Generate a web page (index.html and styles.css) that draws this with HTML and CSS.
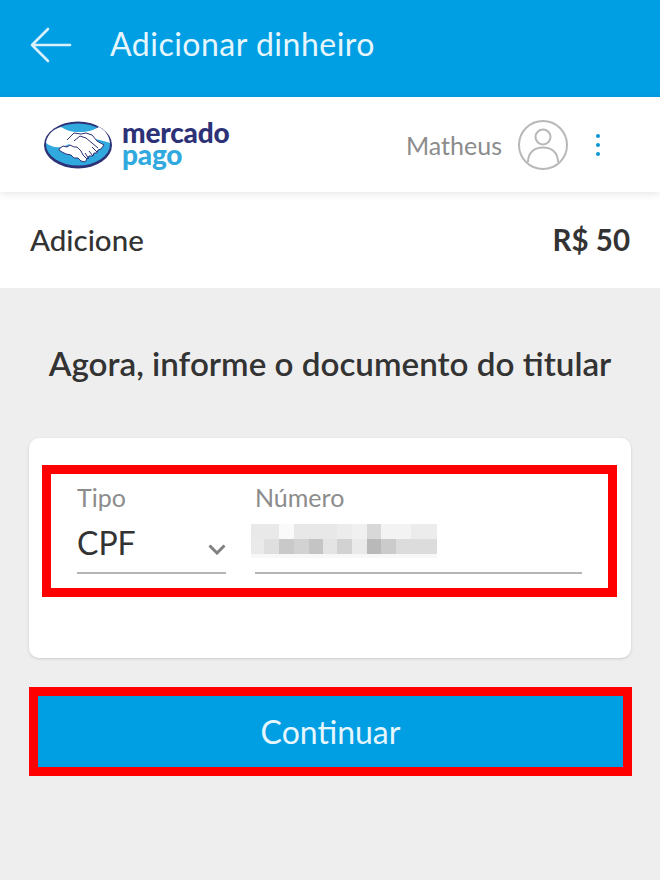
FILE: index.html
```html
<!DOCTYPE html>
<html lang="en">
<head>
    <meta charset="UTF-8">
    <meta name="viewport" content="width=device-width, initial-scale=1.0">
    <title>Adicionar dinheiro</title>
    <link rel="stylesheet" href="styles.css">
</head>
<body>
    <header class="app-bar">
        <svg class="back-icon" width="42" height="36" viewBox="0 0 42 36" fill="none" stroke="#d9f1fb" stroke-width="2.6" stroke-linecap="round" stroke-linejoin="round">
            <path d="M40 18H2M18 2L2 18l16 16"/>
        </svg>
        <h1>Adicionar dinheiro</h1>
    </header>

    <div class="brand-bar">
        <div class="logo">
            <svg width="70" height="48" viewBox="0 0 70 48">
                <ellipse cx="35" cy="24" rx="34" ry="23.500" fill="#2d3277"/>
                <ellipse cx="35" cy="23.500" rx="32" ry="21" fill="#30a9de"/>
                <path d="M3 22C4 14 10 8 18 6c5 3 10 5 18 5 9 0 15-2 20-5 6 3 10 8 11 16-5-2-10-3-15-4-6 1-12 2-17 2-6 1-11 5-17 6-6 1-11-1-15-4z" fill="#fff"/>
                <path d="M24 19l7-7 7 1 5-1 6 2 5 6 7 4-3 4-3 1-1 3-3 0-1 3-4 0-2 3-4 0-4-2-5-4" fill="#fff" stroke="#2d3277" stroke-width="1" stroke-linejoin="round"/>
                <path d="M16 28l4-3 4 1 3-2 4 2 3 0 4 4 2 4 4 4-2 3-4-1-3-3-4 0-3-3-5-1-4-2-3-2z" fill="#fff" stroke="#2d3277" stroke-width="1" stroke-linejoin="round"/>
                <path d="M31 20l6-5 6 2 12 10M46 38l-4-6M50 35l-4-5M54 31l-5-5" fill="none" stroke="#2d3277" stroke-width="1"/>
            </svg>
            <div class="logo-text">
                <span class="logo-mercado">mercado</span>
                <span class="logo-pago">pago</span>
            </div>
        </div>
        <div class="user">
            <span class="user-name">Matheus</span>
            <svg class="avatar" width="50" height="50" viewBox="0 0 50 50" fill="none" stroke="#b8b8b8" stroke-width="2">
                <circle cx="25" cy="25" r="24"/>
                <circle cx="25" cy="17" r="7.500"/>
                <path d="M10 42c0-10 7-14.500 15-14.500S40 32 40 42"/>
            </svg>
            <div class="dots"><i></i><i></i><i></i></div>
        </div>
    </div>

    <div class="amount-row">
        <span>Adicione</span>
        <span class="amount">R$ 50</span>
    </div>

    <main class="content">
        <h2>Agora, informe o documento do titular</h2>
        <div class="card">
            <div class="fields">
                <div class="field field-type">
                    <label>Tipo</label>
                    <div class="value">
                        CPF
                        <svg class="chevron" width="18" height="11" viewBox="0 0 18 11" fill="none" stroke="#808080" stroke-width="3">
                            <path d="M1.500 1.500L9 9l7.500-7.500"/>
                        </svg>
                    </div>
                </div>
                <div class="field field-number">
                    <label>Número</label>
                    <div class="value">
                        <div class="blur"></div>
                    </div>
                </div>
            </div>
        </div>
        <button class="continue">Continuar</button>
    </main>
</body>
</html>
```

FILE: styles.css
```css
* {
    margin: 0;
    padding: 0;
    box-sizing: border-box;
}
body {
    font-family: Lato, sans-serif;
    background-color: #eeeeee;
    color: #333333;
    min-height: 100vh;
}
.app-bar {
    height: 97px;
    background-color: #009ee3;
    display: flex;
    align-items: center;
    padding: 0 0 8px 30px;
    gap: 38px;
}
.back-icon {
    flex-shrink: 0;
}
.app-bar h1 {
    font-size: 32px;
    line-height: 36px;
    font-weight: 400;
    color: #e6f6fd;
    letter-spacing: 0.5px;
    margin-top: -2px;
}
.brand-bar {
    height: 95px;
    background: white;
    display: flex;
    align-items: center;
    justify-content: space-between;
    padding: 0 60px 0 43px;
    box-shadow: 0 2px 8px rgba(0,0,0,0.1);
    position: relative;
}
.logo {
    display: flex;
    align-items: center;
    gap: 9px;
}
.logo-text {
    display: flex;
    flex-direction: column;
    font-weight: 900;
    font-size: 28px;
    line-height: 22px;
    letter-spacing: -0.2px;
    margin-top: -4px;
}
.logo-mercado {
    color: #2d3277;
}
.logo-pago {
    color: #30a9de;
}
.user {
    display: flex;
    align-items: center;
}
.user-name {
    font-size: 25px;
    color: #8c8c8c;
    margin-right: 16px;
}
.dots {
    display: flex;
    flex-direction: column;
    gap: 5px;
    margin-left: 28px;
}
.dots i {
    width: 4px;
    height: 4px;
    border-radius: 50%;
    background-color: #0a96d2;
}
.amount-row {
    height: 96px;
    background: white;
    display: flex;
    align-items: center;
    justify-content: space-between;
    padding: 0 30px 2px;
    font-size: 29.5px;
    font-weight: 500;
}
.amount {
    font-weight: 700;
}
.content {
    padding: 0 29px;
}
.content h2 {
    font-size: 33.200px;
    font-weight: 600;
    text-align: center;
    line-height: 40px;
    padding-top: 55px;
    margin-bottom: 55px;
    white-space: nowrap;
}
.card {
    height: 220px;
    background: white;
    border-radius: 10px;
    box-shadow: 0 1px 3px rgba(0,0,0,0.15);
    padding: 27px 14px 0 13px;
}
.fields {
    height: 132px;
    border: 9px solid #ff0000;
    display: flex;
    gap: 29px;
    padding: 9px 26px 0 26px;
}
.field label {
    display: block;
    font-size: 25px;
    line-height: 28px;
    color: #8c8c8c;
}
.field .value {
    height: 63px;
    border-bottom: 2px solid #b5b5b5;
    position: relative;
    font-size: 32px;
    line-height: 64px;
}
.field-type {
    width: 149px;
}
.field-number {
    flex: 1;
}
.chevron {
    position: absolute;
    right: 0;
    top: 33px;
}
/* the blurred document number, two rows of big pixels */
.blur {
    position: absolute;
    left: -4px;
    top: 13px;
    width: 186px;
    height: 34px;
    background-color: #f8f8f8;
    background-repeat: no-repeat;
    background-size: 100% 15px;
    background-position: 0 0, 0 15px;
    background-image:
        linear-gradient(90deg, #e9e9e9 0 28px, #fafafa 28px 43px, #e8e8e8 43px 86px, #ececec 86px 101px, #f0f0f0 101px 116px, #d8d8d8 116px 130px, #f3f3f3 130px 160px, #ececec 160px),
        linear-gradient(90deg, #eaeaea 0 13px, #dfdfdf 13px 28px, #c9c9c9 28px 43px, #d2d2d2 43px 58px, #c4c4c4 58px 72px, #e4e4e4 72px 86px, #d2d2d2 86px 101px, #eaeaea 101px 116px, #b9b9b9 116px 130px, #cbcbcb 130px 145px, #dcdcdc 145px);
}
.continue {
    display: block;
    width: 603px;
    height: 89px;
    margin-top: 29px;
    border: 9px solid #ff0000;
    background-color: #009ee3;
    color: #e6f6fd;
    font-family: Lato, sans-serif;
    font-size: 32px;
}
```
